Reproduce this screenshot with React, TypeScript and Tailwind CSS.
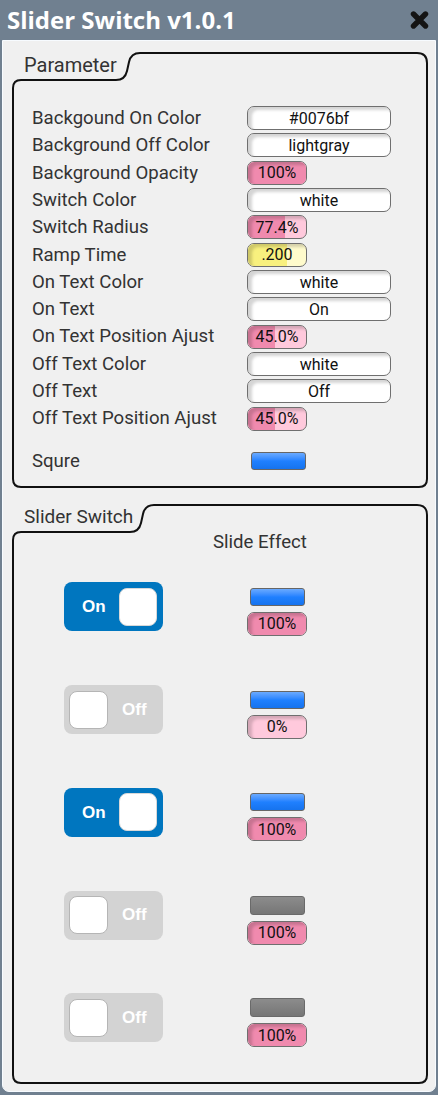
import React from "react";

type PanelProps = {
  label: string;
  height: number;
  shift: number;
  className: string;
  labelClass: string;
  children?: React.ReactNode;
};

function TabPanel({ label, height, shift, className, labelClass, children }: PanelProps) {
  const H = height;
  const s = shift;
  const d = `M1,${H - 9} L1,36 Q1,28 9,28 L${104 + s},28 Q${113 + s},28 ${115 + s},19 L${117 + s},10 Q${119 + s},1 ${128 + s},1 L405,1 Q415,1 415,11 L415,${H - 9} Q415,${H - 1} 407,${H - 1} L9,${H - 1} Q1,${H - 1} 1,${H - 9} Z`;
  return (
    <div className={"relative w-[416px] ml-[9px] " + className}>
      <svg
        className="absolute inset-0 pointer-events-none"
        width={416}
        height={H}
        viewBox={`0 0 416 ${H}`}
      >
        <path d={d} fill="none" stroke="#111" strokeWidth={2} />
      </svg>
      <div className="relative">
        <div className={"h-[26px] pl-[12px] leading-[26px] text-[#333] font-['Roboto',sans-serif] " + labelClass}>
          {label}
        </div>
        {children}
      </div>
    </div>
  );
}

type FieldProps = {
  text: string;
  wide?: boolean;
  kind?: "white" | "pink" | "yellow";
  fill?: number;
};

function Field({ text, wide, kind = "white", fill = 0 }: FieldProps) {
  const base =
    kind === "white" ? "bg-white" : kind === "pink" ? "bg-[#ffc9dc]" : "bg-[#fffbcc]";
  const fillColor = kind === "yellow" ? "bg-[#f8f07e]" : "bg-[#f08aae]";
  return (
    <div
      className={
        "relative h-[24px] rounded-[7px] border-[1.5px] border-[#6f6f6f] overflow-hidden " +
        base +
        " " +
        (wide ? "w-[144px]" : "w-[60px]")
      }
    >
      {kind !== "white" && fill > 0 && (
        <div className={"absolute left-0 top-0 bottom-0 " + fillColor} style={{ width: fill }} />
      )}
      <div className="absolute inset-0 rounded-[6px] shadow-[inset_4px_3px_3px_rgba(0,0,0,0.17)]" />
      <div className="relative h-full pt-[1px] flex items-center justify-center text-[16px] text-[#111] font-['Roboto',sans-serif] leading-none">
        {text}
      </div>
    </div>
  );
}

function BlueBar() {
  return (
    <div className="w-[55px] h-[18px] rounded-[3px] border border-[#666] bg-linear-to-b from-[#6aaaff] via-[#1f80ff] to-[#1673ee]" />
  );
}

function GrayBar() {
  return (
    <div className="w-[55px] h-[19px] rounded-[3px] border border-[#6a6a6a] bg-linear-to-b from-[#8c8c8c] to-[#767676]" />
  );
}

function Switch({ on }: { on: boolean }) {
  if (on) {
    return (
      <div className="w-[99px] h-[49px] rounded-[8px] bg-[#0076bf] flex items-center pl-[18px] pr-[6px] justify-between">
        <span className="text-white font-bold text-[17px] font-['Liberation_Sans',Arial,sans-serif]">On</span>
        <div className="w-[38px] h-[38px] rounded-[8px] bg-white border border-[#d8d8d8]" />
      </div>
    );
  }
  return (
    <div className="w-[99px] h-[49px] rounded-[8px] bg-[#d3d3d3] flex items-center pl-[5px] gap-[14px]">
      <div className="w-[39px] h-[38px] rounded-[8px] bg-white border border-[#b5b5b5]" />
      <span className="text-white font-bold text-[17px] font-['Liberation_Sans',Arial,sans-serif]">Off</span>
    </div>
  );
}

const params: { label: string; field: FieldProps }[] = [
  { label: "Backgound On Color", field: { text: "#0076bf", wide: true } },
  { label: "Background Off Color", field: { text: "lightgray", wide: true } },
  { label: "Background Opacity", field: { text: "100%", kind: "pink", fill: 60 } },
  { label: "Switch Color", field: { text: "white", wide: true } },
  { label: "Switch Radius", field: { text: "77.4%", kind: "pink", fill: 37 } },
  { label: "Ramp Time", field: { text: ".200", kind: "yellow", fill: 39 } },
  { label: "On Text Color", field: { text: "white", wide: true } },
  { label: "On Text", field: { text: "On", wide: true } },
  { label: "On Text Position Ajust", field: { text: "45.0%", kind: "pink", fill: 27 } },
  { label: "Off Text Color", field: { text: "white", wide: true } },
  { label: "Off Text", field: { text: "Off", wide: true } },
  { label: "Off Text Position Ajust", field: { text: "45.0%", kind: "pink", fill: 27 } },
];

const switches: { on: boolean; blue: boolean; pct: string; fill: number }[] = [
  { on: true, blue: true, pct: "100%", fill: 60 },
  { on: false, blue: true, pct: "0%", fill: 0 },
  { on: true, blue: true, pct: "100%", fill: 60 },
  { on: false, blue: false, pct: "100%", fill: 60 },
  { on: false, blue: false, pct: "100%", fill: 60 },
];

export default function App() {
  return (
    <div className="w-[438px] h-[1095px] bg-[#708090] flex flex-col overflow-hidden">
      <div className="h-[40px] shrink-0 flex items-center justify-between pl-[7px] pr-[9px]">
        <span className="text-white font-bold text-[24px] leading-[32px] font-['Open_Sans',sans-serif]">
          Slider Switch v1.0.1
        </span>
        <svg width="19" height="18" viewBox="0 0 19 18">
          <path d="M3.5,3 L15.5,15 M15.5,3 L3.5,15" stroke="#141414" strokeWidth={5.4} strokeLinecap="round" />
        </svg>
      </div>
      <div className="mx-[2px] mb-[3px] flex-1 rounded-b-[7px] bg-[#f0f0f0] border border-[#f7fbff] pt-[11px]">
        <TabPanel label="Parameter" height={436} shift={0} className="h-[436px]" labelClass="text-[20px]">
          <div className="mt-[26.5px]">
            {params.map((p) => (
              <div key={p.label} className="h-[27.33px] flex items-center">
                <div className="w-[235px] pl-[20px] text-[18.6px] text-[#333] font-['Roboto',sans-serif] leading-none whitespace-nowrap">
                  {p.label}
                </div>
                <Field {...p.field} />
              </div>
            ))}
            <div className="mt-[15px] h-[27.33px] flex items-center">
              <div className="w-[239px] pl-[20px] text-[18.6px] text-[#333] font-['Roboto',sans-serif] leading-none">
                Squre
              </div>
              <BlueBar />
            </div>
          </div>
        </TabPanel>
        <TabPanel label="Slider Switch" height={580} shift={14} className="h-[580px] mt-[16px]" labelClass="text-[19px]">
          <div className="h-[24px] pl-[201px] text-[18.6px] leading-[24px] text-[#333] font-['Roboto',sans-serif]">
            Slide Effect
          </div>
          <div className="mt-[1.5px]">
            {switches.map((s, i) => (
              <div key={i} className="h-[102.75px] flex items-center pl-[52px]">
                <Switch on={s.on} />
                <div className="ml-[84px] w-[60px] mt-[10px] flex flex-col items-center gap-[6px]">
                  {s.blue ? <BlueBar /> : <GrayBar />}
                  <Field text={s.pct} kind="pink" fill={s.fill} />
                </div>
              </div>
            ))}
          </div>
        </TabPanel>
      </div>
    </div>
  );
}
